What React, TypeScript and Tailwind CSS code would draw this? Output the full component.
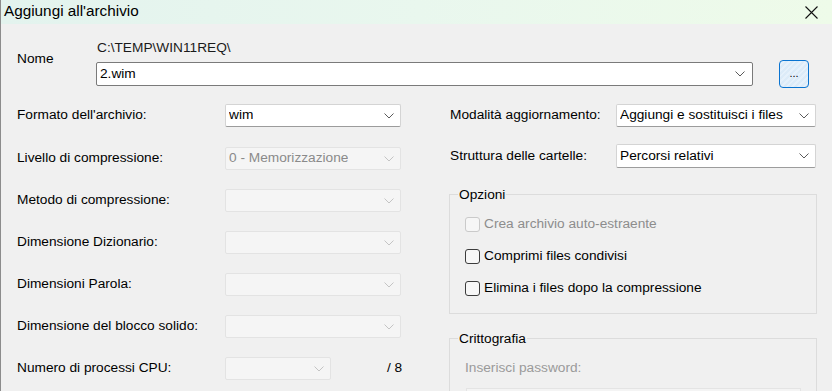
import React from 'react';

const Chevron: React.FC<{ disabled?: boolean }> = ({ disabled }) => (
  <svg width="10" height="6" viewBox="0 0 10 6" className="shrink-0">
    <path
      d="M0.5 0.5 L5 5 L9.5 0.5"
      fill="none"
      stroke={disabled ? '#c4c4c4' : '#5a5a5a'}
      strokeWidth="1"
    />
  </svg>
);

interface ComboProps {
  value?: string;
  disabled?: boolean;
  width: string;
  height?: string;
}

const Combo: React.FC<ComboProps> = ({ value = '', disabled, width, height = 'h-[23px]' }) => (
  <div
    className={`${width} ${height} flex items-center justify-between pl-[3px] pr-[6px] rounded-[2px] border ${
      disabled
        ? 'bg-[#f5f5f5] border-[#e3e3e3] text-[#8a8a8a]'
        : 'bg-white border-[#d4d4d4] border-b-[#9c9c9c] text-black'
    }`}
  >
    <span className="truncate">{value}</span>
    <Chevron disabled={disabled} />
  </div>
);

const Check: React.FC<{ label: string; disabled?: boolean }> = ({ label, disabled }) => (
  <div className="flex items-center h-[16px]">
    <span
      className={`w-[15px] h-[15px] rounded-[3px] border ${
        disabled ? 'border-[#cacaca] bg-[#f6f6f6]' : 'border-[#3c3c3c] bg-[#f7f7f7]'
      }`}
    />
    <span className={`ml-[4px] ${disabled ? 'text-[#8d8d8d]' : 'text-black'}`}>{label}</span>
  </div>
);

const leftRows: { label: string; value?: string; disabled?: boolean }[] = [
  { label: "Formato dell'archivio:", value: 'wim' },
  { label: 'Livello di compressione:', value: '0 - Memorizzazione', disabled: true },
  { label: 'Metodo di compressione:', disabled: true },
  { label: 'Dimensione Dizionario:', disabled: true },
  { label: 'Dimensioni Parola:', disabled: true },
  { label: 'Dimensione del blocco solido:', disabled: true },
];

export default function App() {
  return (
    <div
      className="w-[832px] h-[391px] overflow-hidden bg-[#f0f0f0] border-l border-[#8c8c8c] text-[13.7px] text-black"
      style={{ fontFamily: '"Liberation Sans", Arial, sans-serif' }}
    >
      {/* title bar */}
      <div className="h-[24px] flex items-center justify-between pl-[3px] pr-[14px] bg-gradient-to-r from-[#e3f3ee] via-[#e9f7ee] to-[#eefbe9]">
        <span className="text-[15.3px] leading-none -mt-[2px]">Aggiungi all'archivio</span>
        <svg width="13" height="13" viewBox="0 0 13 13">
          <path d="M0.5 0.5 L12.5 12.5 M12.5 0.5 L0.5 12.5" stroke="#111" strokeWidth="1.1" fill="none" />
        </svg>
      </div>

      {/* name row */}
      <div className="flex pl-[16px] pt-[16px]">
        <div className="w-[80px] pt-[9px]">Nome</div>
        <div className="flex flex-col">
          <div className="h-[15px] leading-[15px] text-[#1a1a1a]">C:\TEMP\WIN11REQ\</div>
          <div className="flex items-center mt-[5px]">
            <div className="w-[657px] h-[24px] -ml-[1px] flex items-center justify-between pl-[3px] pr-[7px] bg-white border border-[#7a7a7a] rounded-[2px]">
              <span>2.wim</span>
              <Chevron />
            </div>
            <button className="ml-[26px] w-[30px] h-[28px] rounded-[4px] border border-[#0a74d1] bg-[repeating-linear-gradient(135deg,#dcebf8_0px,#dcebf8_2px,#e6f1fb_2px,#e6f1fb_4px)] flex items-center justify-center text-[11px] leading-none pb-[2px]">
              ...
            </button>
          </div>
        </div>
      </div>

      {/* main */}
      <div className="flex pl-[16px] mt-[16px]">
        {/* left column */}
        <div className="w-[432px] flex flex-col gap-[19px]">
          {leftRows.map((r, i) => (
            <div key={i} className={`flex items-center h-[23px] ${i === 1 ? 'mt-[1px]' : ''}`}>
              <span className="w-[208px]">{r.label}</span>
              <Combo width="w-[176px]" value={r.value} disabled={r.disabled} />
            </div>
          ))}
          <div className="flex items-center h-[23px]">
            <span className="w-[208px]">Numero di processi CPU:</span>
            <Combo width="w-[106px]" disabled />
            <span className="ml-[56px]">/ 8</span>
          </div>
        </div>

        {/* right column */}
        <div className="w-[368px] flex flex-col">
          <div className="flex items-center h-[23px]">
            <span className="w-[167px] pl-[1px]">Modalità aggiornamento:</span>
            <Combo width="w-[200px]" value="Aggiungi e sostituisci i files" />
          </div>
          <div className="flex items-center h-[24px] mt-[17px]">
            <span className="w-[167px] pl-[1px]">Struttura delle cartelle:</span>
            <Combo width="w-[200px]" height="h-[24px]" value="Percorsi relativi" />
          </div>

          <fieldset className="mt-[19px] w-[368px] h-[127px] border border-[#dcdcdc] px-[8px] pt-[14px]">
            <legend className="px-[1px] leading-[15px]">Opzioni</legend>
            <div className="flex flex-col gap-[16px] pl-[7px]">
              <Check label="Crea archivio auto-estraente" disabled />
              <Check label="Comprimi files condivisi" />
              <Check label="Elimina i files dopo la compressione" />
            </div>
          </fieldset>

          <fieldset className="mt-[17px] w-[368px] h-[80px] border border-[#dcdcdc] px-[8px] pt-[12px]">
            <legend className="px-[1px] leading-[15px]">Crittografia</legend>
            <div className="pl-[7px] text-[#9a9a9a]">Inserisci password:</div>
            <div className="ml-[8px] mt-[9px] w-[335px] h-[24px] border border-[#e4e4e4] bg-[#f4f4f4]" />
          </fieldset>
        </div>
      </div>
    </div>
  );
}
